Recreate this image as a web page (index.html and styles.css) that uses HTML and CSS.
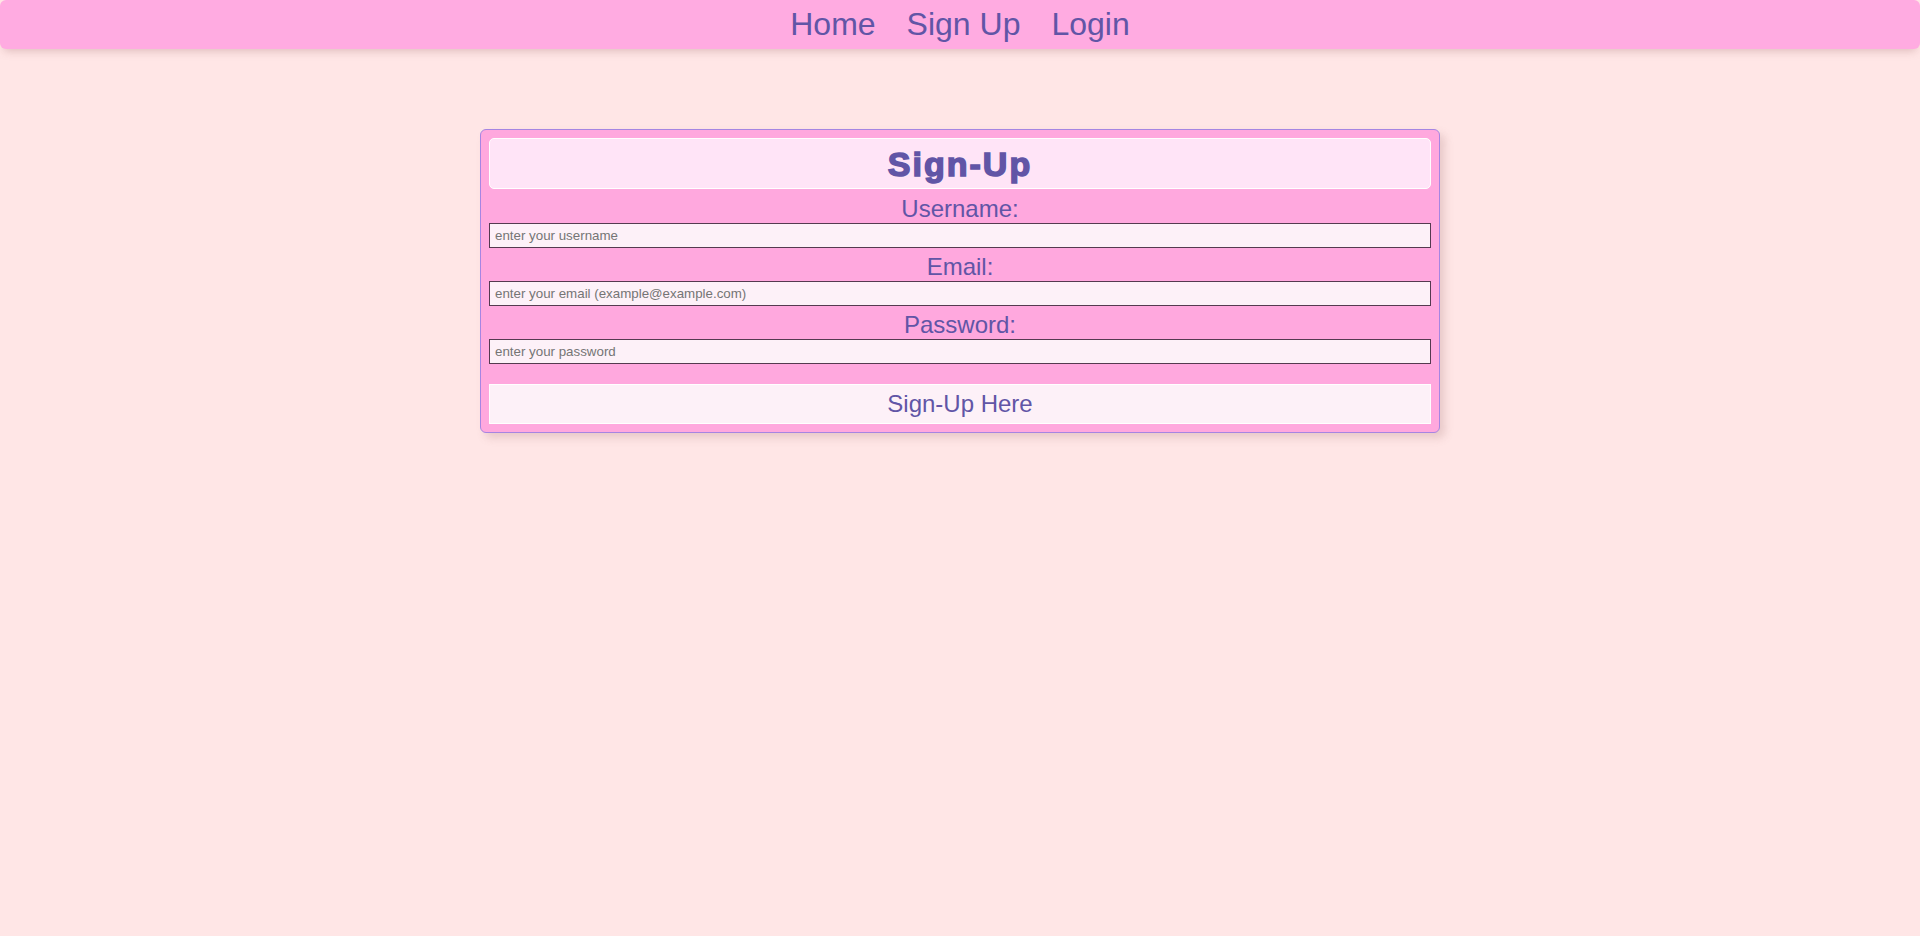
FILE: index.html
```html
<!DOCTYPE html>
<html lang="en">
<head>
<meta charset="utf-8">
<title>Sign-Up</title>
<link rel="stylesheet" href="styles.css">
</head>
<body>
  <nav class="navbar">
    <a class="nav-link" href="#">Home</a>
    <a class="nav-link" href="#">Sign Up</a>
    <a class="nav-link" href="#">Login</a>
  </nav>
  <main class="page">
    <form class="signup-card">
      <div class="card-header">
        <h1 class="card-title">Sign-Up</h1>
      </div>
      <label class="field-label first" for="username">Username:</label>
      <input class="field-input" id="username" type="text" placeholder="enter your username">
      <label class="field-label" for="email">Email:</label>
      <input class="field-input" id="email" type="email" placeholder="enter your email (example@example.com)">
      <label class="field-label" for="password">Password:</label>
      <input class="field-input" id="password" type="password" placeholder="enter your password">
      <button class="submit-btn" type="button">Sign-Up Here</button>
    </form>
  </main>
</body>
</html>
```
FILE: styles.css
```css
* {
  box-sizing: border-box;
}

html, body {
  margin: 0;
  padding: 0;
}

body {
  background: #FFE6E6;
  font-family: "Liberation Sans", Arial, sans-serif;
  color: #6155A6;
  min-height: 936px;
}

.navbar {
  display: flex;
  justify-content: center;
  gap: 31px;
  height: 49px;
  padding: 6px 0;
  background: #FFABE1;
  border-radius: 6px;
  box-shadow: 0 6px 8px -4px rgba(160, 110, 110, 0.35);
}

.nav-link {
  font-size: 32px;
  line-height: 37px;
  color: #6155A6;
  text-decoration: none;
}

.page {
  display: flex;
  justify-content: center;
  padding-top: 80px;
}

.signup-card {
  width: 960px;
  display: flex;
  flex-direction: column;
  background: #FFA8DE;
  border: 1px solid #A685E2;
  border-radius: 6px;
  padding: 8px;
  box-shadow: 5px 5px 8px rgba(150, 100, 100, 0.22);
}

.card-header {
  background: #FFE4F7;
  border: 1px solid #FFFFFF;
  border-radius: 5px;
  padding: 7px 0 5px;
  text-align: center;
}

.card-title {
  margin: 0;
  font-family: "Liberation Sans", Arial, sans-serif;
  font-weight: bold;
  font-size: 34px;
  line-height: 37px;
  letter-spacing: 2px;
  -webkit-text-stroke: 1.5px #6155A6;
  color: #6155A6;
}

.field-label {
  display: block;
  margin-top: 5px;
  font-size: 24px;
  line-height: 28px;
  text-align: center;
  color: #6155A6;
}

.field-label.first {
  margin-top: 6px;
}

.field-input {
  display: block;
  width: 100%;
  height: 25px;
  margin: 0;
  padding: 0 5px;
  border: 1px solid #553A50;
  background: #FDF1F8;
  font-family: "Liberation Sans", Arial, sans-serif;
  font-size: 13.333px;
  color: #333;
  outline: none;
}

.field-input::placeholder {
  color: #757575;
}

.submit-btn {
  display: block;
  width: 100%;
  height: 40px;
  margin-top: 20px;
  padding: 0;
  border: 1px solid #FFFFFF;
  background: #FDF1F8;
  font-family: "Liberation Sans", Arial, sans-serif;
  font-size: 24px;
  color: #6155A6;
  cursor: pointer;
}
```
